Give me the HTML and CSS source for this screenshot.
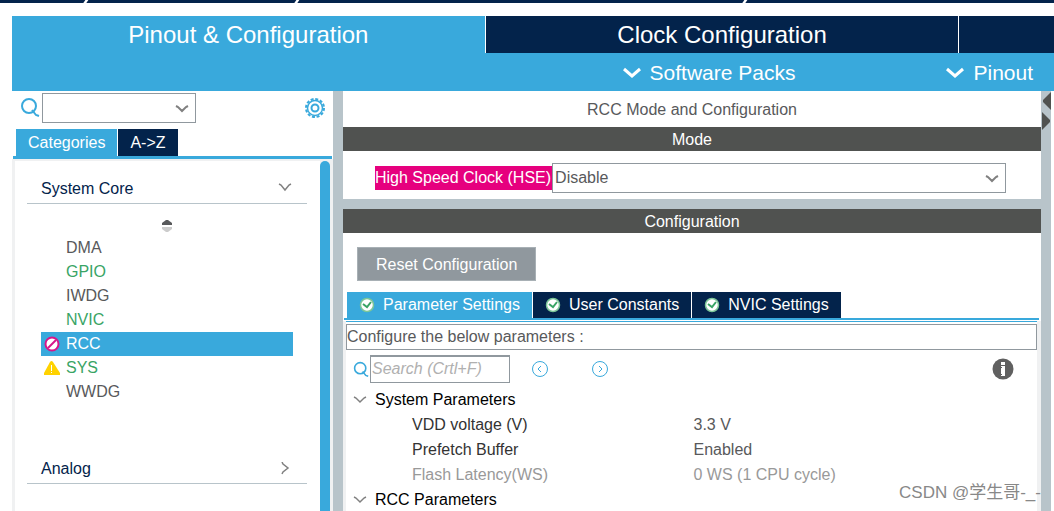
FILE: index.html
```html
<!DOCTYPE html>
<html lang="en">
<head>
    <meta charset="UTF-8">
    <meta name="viewport" content="width=device-width, initial-scale=1.0">
    <title>Pinout &amp; Configuration</title>
    <link rel="stylesheet" href="styles.css">
</head>
<body>
    <!-- Breadcrumb edge -->
    <div class="breadcrumb">
        <span class="slash first"></span>
        <span class="slash second"></span>
        <span class="slash third"></span>
    </div>

    <header>
        <nav class="main-tabs">
            <button class="main-tab active">Pinout &amp; Configuration</button>
            <button class="main-tab">Clock Configuration</button>
            <button class="main-tab" aria-label="Next tab"></button>
        </nav>
        <div class="sub-bar">
            <button class="menu-btn">
                <svg width="18" height="12" viewBox="0 0 18 12"><path d="M1 2 L9 9 L17 2" /></svg>
                Software Packs
            </button>
            <button class="menu-btn">
                <svg width="18" height="12" viewBox="0 0 18 12"><path d="M1 2 L9 9 L17 2" /></svg>
                Pinout
            </button>
        </div>
    </header>

    <div class="workspace">
        <aside class="sidebar">
            <div class="filter-row">
                <svg class="search-icon" width="20" height="20" viewBox="0 0 20 20"><circle cx="9" cy="8" r="7" /><path d="M12 12 L16 17 L19 18" /></svg>
                <span class="select-box filter-select">
                    <select aria-label="Filter"><option></option></select>
                    <svg class="arrow" width="14" height="8" viewBox="0 0 14 8"><path d="M1 1 L3 2 L7 6 L11 2 L13 1" /></svg>
                </span>
                <button class="icon-btn gear" aria-label="Settings">
                    <svg width="20" height="20" viewBox="0 0 20 20">
                        <circle cx="10" cy="10" r="9" stroke-width="2" stroke-dasharray="3 1.71" />
                        <circle cx="10" cy="10" r="7.5" stroke-width="1.5" />
                        <circle cx="10" cy="10" r="3.5" stroke-width="2" />
                    </svg>
                </button>
            </div>

            <div class="side-tabs">
                <button class="tab active">Categories</button>
                <button class="tab">A-&gt;Z</button>
            </div>

            <div class="category-panel">
                <div class="category-list">
                    <button class="category">
                        System Core
                        <svg class="chevron" width="14" height="14" viewBox="0 0 14 14"><path d="M1 2 L3 3 L7 8 L11 3 L13 2" /></svg>
                    </button>
                    <button class="sort-btn" aria-label="Sort">
                        <svg width="12" height="14" viewBox="0 0 12 14"><path fill="#58595b" d="M1 6 V4 L5 1 H7 L11 4 V6 Z" /><path fill="#cccccc" d="M1 8 V10 L5 13 H7 L11 10 V8 Z" /></svg>
                    </button>
                    <ul class="items">
                        <li><a href="#">DMA</a></li>
                        <li><a href="#" class="used">GPIO</a></li>
                        <li><a href="#">IWDG</a></li>
                        <li><a href="#" class="used">NVIC</a></li>
                        <li>
                            <a href="#" class="selected">
                                <svg class="status" width="18" height="18" viewBox="0 0 18 18"><circle cx="9" cy="9" r="6.5" fill="#ffffff" stroke="#d6168b" stroke-width="2" /><path stroke="#d6168b" stroke-width="2" d="M5 13 L13 5" /></svg>
                                RCC
                            </a>
                        </li>
                        <li>
                            <a href="#" class="used">
                                <svg class="status" width="18" height="18" viewBox="0 0 18 18"><path fill="#ffd200" d="M7 3 Q8.500 1 10 3 L17 14 V16 H1 V14 Z" /><path stroke="#ffffff" d="M8.500 6 V12 M8.500 13 V14" /></svg>
                                SYS
                            </a>
                        </li>
                        <li><a href="#">WWDG</a></li>
                    </ul>
                    <button class="category">
                        Analog
                        <svg class="chevron" width="14" height="14" viewBox="0 0 14 14"><path d="M4 0 L5 2 L10 6 L5 10 L4 12" /></svg>
                    </button>
                </div>
                <div class="scroll-track"><div class="scroll-thumb"></div></div>
            </div>
        </aside>

        <main>
            <section class="mode-panel">
                <h1>RCC Mode and Configuration</h1>
                <h2>Mode</h2>
                <div class="mode-row">
                    <label for="hse">High Speed Clock (HSE)</label>
                    <span class="select-box hse-select">
                        <select id="hse"><option>Disable</option></select>
                        <svg class="arrow" width="14" height="8" viewBox="0 0 14 8"><path d="M1 1 L3 2 L7 6 L11 2 L13 1" /></svg>
                    </span>
                </div>
            </section>

            <section class="config-panel">
                <h2>Configuration</h2>
                <button class="reset-btn">Reset Configuration</button>

                <div class="config-tabs">
                    <button class="tab active">
                        <svg width="16" height="16" viewBox="0 0 16 16"><circle cx="8" cy="8" r="6.5" fill="#ffffff" stroke="#7cc698" stroke-width="1.5" /><path stroke="#39a465" stroke-width="2" d="M4 7 L8 10 L12 5" /></svg>
                        Parameter Settings
                    </button>
                    <button class="tab">
                        <svg width="16" height="16" viewBox="0 0 16 16"><circle cx="8" cy="8" r="6.5" fill="#ffffff" stroke="#7cc698" stroke-width="1.5" /><path stroke="#39a465" stroke-width="2" d="M4 7 L8 10 L12 5" /></svg>
                        User Constants
                    </button>
                    <button class="tab">
                        <svg width="16" height="16" viewBox="0 0 16 16"><circle cx="8" cy="8" r="6.5" fill="#ffffff" stroke="#7cc698" stroke-width="1.5" /><path stroke="#39a465" stroke-width="2" d="M4 7 L8 10 L12 5" /></svg>
                        NVIC Settings
                    </button>
                </div>

                <div class="parameters">
                    <p class="hint">Configure the below parameters :</p>
                    <div class="search-row">
                        <svg class="search-icon" width="16" height="16" viewBox="0 0 20 20"><circle cx="9" cy="9" r="7" /><path d="M12 13 L16 18 L19 19" /></svg>
                        <input type="text" aria-label="Search" placeholder="Search (Crtl+F)">
                        <button class="icon-btn" aria-label="Previous">
                            <svg width="18" height="18" viewBox="0 0 18 18"><circle cx="9" cy="9" r="7.5" /><path d="M10 6 L7 9 L10 12" /></svg>
                        </button>
                        <button class="icon-btn" aria-label="Next">
                            <svg width="18" height="18" viewBox="0 0 18 18"><circle cx="9" cy="9" r="7.5" /><path d="M8 6 L11 9 L8 12" /></svg>
                        </button>
                        <button class="icon-btn info" aria-label="Information">
                            <svg width="22" height="22" viewBox="0 0 22 22"><circle cx="11" cy="11" r="10.500" fill="#606060" stroke="none" /><path fill="#ffffff" stroke="none" d="M9 4 H13 V7 H9 Z M9 8 H13 V18 H9 Z" /><path stroke="#606060" d="M9 9.500 H10 M9 16.500 H10" /></svg>
                        </button>
                    </div>
                    <table>
                        <tr class="group">
                            <th colspan="2"><svg class="chevron" width="14" height="14" viewBox="0 0 14 14"><path d="M1 4 L3 5 L7 9 L11 5 L13 4" /></svg>System Parameters</th>
                        </tr>
                        <tr><td>VDD voltage (V)</td><td>3.3 V</td></tr>
                        <tr><td>Prefetch Buffer</td><td>Enabled</td></tr>
                        <tr class="disabled"><td>Flash Latency(WS)</td><td>0 WS (1 CPU cycle)</td></tr>
                        <tr class="group">
                            <th colspan="2"><svg class="chevron" width="14" height="14" viewBox="0 0 14 14"><path d="M1 4 L3 5 L7 9 L11 5 L13 4" /></svg>RCC Parameters</th>
                        </tr>
                    </table>
                </div>
            </section>
        </main>

        <div class="splitter">
            <button class="icon-btn" aria-label="Collapse"><svg width="10" height="20" viewBox="0 0 10 20"><path d="M10 1 V19 L2 11 V9 Z" /></svg></button>
            <button class="icon-btn" aria-label="Expand"><svg width="10" height="20" viewBox="0 0 10 20"><path d="M1 1 V19 L9 11 V9 Z" /></svg></button>
        </div>
    </div>

    <div class="watermark">CSDN @学生哥-_-</div>
</body>
</html>
```
FILE: styles.css
```css
/* Global Styles */
* {
    box-sizing: border-box;
}

body {
    font-family: "Liberation Sans", "Noto Sans CJK SC", Arial, sans-serif;
    font-size: 16px;
    line-height: 24px;
    color: #58595b;
    background-color: white;
    margin: 0;
    height: 100vh;
    overflow: hidden;
    display: flex;
    flex-direction: column;
}

button,
select,
input {
    font: inherit;
    color: inherit;
    border: none;
    border-radius: 0;
    background: none;
    margin: 0;
    padding: 0;
}

button {
    cursor: pointer;
}

svg {
    display: block;
    flex: none;
    fill: none;
}

h1,
h2 {
    margin: 0;
    font-size: 16px;
    font-weight: normal;
    text-align: center;
}

h2 {
    height: 24px;
    line-height: 26px;
    background-color: #505250;
    color: white;
}

/* Breadcrumb edge */
.breadcrumb {
    position: relative;
    flex: none;
    height: 3px;
    margin-bottom: 13px;
    background-color: #03234b;
    overflow: hidden;
}

.slash {
    position: absolute;
    top: 0;
    width: 3px;
    height: 4px;
    background-color: white;
    transform: skewX(-35deg);
}

.slash.first {
    left: 8%;
}

.slash.second {
    left: 28%;
}

.slash.third {
    left: 70.5%;
}

/* Header */
header {
    flex: none;
    margin-left: 12px;
    background-color: #39a9dc;
    color: white;
}

.main-tabs {
    display: grid;
    grid-template-columns: 5fr 5fr 1fr;
    gap: 1px;
    height: 37px;
    background-color: white;
}

.main-tab {
    background-color: #03234b;
    font-size: 24px;
}

.sub-bar {
    display: flex;
    justify-content: flex-end;
    gap: 151px;
    height: 38px;
    padding: 2px 21px 0 0;
}

.menu-btn {
    display: flex;
    align-items: center;
    gap: 9px;
    font-size: 21px;
}

.menu-btn svg {
    stroke: white;
    stroke-width: 3;
}

/* Workspace */
.workspace {
    flex: 1;
    min-height: 0;
    display: flex;
    padding-right: 3px;
}

.sidebar {
    flex: none;
    width: 343px;
    padding-left: 12px;
    border-right: 10px solid #b8c4ca;
    display: flex;
    flex-direction: column;
}

.filter-row {
    display: flex;
    align-items: center;
    gap: 2px;
    height: 34px;
    padding: 0 8px;
}

.search-icon {
    stroke: #39a9dc;
    stroke-width: 2;
}

.select-box {
    position: relative;
    height: 30px;
    border: 1px solid #90989e;
}

.select-box select {
    display: block;
    width: 100%;
    height: 100%;
    padding-left: 2px;
    appearance: none;
}

.arrow {
    position: absolute;
    right: 6px;
    top: 11px;
    stroke: #808080;
    stroke-width: 2;
    pointer-events: none;
}

.filter-select {
    width: 154px;
}

.icon-btn svg {
    stroke: #39a9dc;
}

.gear {
    margin-left: auto;
}

/* Tabs */
.side-tabs {
    display: flex;
    gap: 1px;
    margin: 4px 1px 0;
    padding-left: 3px;
    border-bottom: 3px solid #39a9dc;
}

.tab {
    display: flex;
    align-items: center;
    justify-content: center;
    gap: 8px;
    height: 27px;
    padding: 0 12px;
    background-color: #03234b;
    color: white;
}

.active {
    background-color: #39a9dc;
}

/* Categories */
.category-panel {
    flex: 1;
    min-height: 0;
    display: flex;
    border: 3px solid #f0f1f2;
    border-width: 2px 0 0 3px;
}

.category-list {
    flex: 1;
    padding: 12px 13px 0 12px;
    display: flex;
    flex-direction: column;
}

.category {
    display: flex;
    align-items: center;
    justify-content: space-between;
    height: 31px;
    padding: 2px 15px 0 14px;
    border-bottom: 1px solid #b8c4ca;
    color: #03234b;
}

.chevron {
    stroke: #808080;
    stroke-width: 1.5;
}

.sort-btn {
    align-self: center;
    padding: 15px 0 3px;
}

.items {
    list-style: none;
    margin: 0 14px 49px;
    padding: 0;
}

.items a {
    display: flex;
    align-items: center;
    gap: 5px;
    height: 24px;
    padding-left: 25px;
    color: inherit;
    text-decoration: none;
}

.items a:has(.status) {
    padding-left: 2px;
}

.items .used {
    color: #39a465;
}

.items .selected {
    background-color: #39a9dc;
    color: white;
}

.scroll-track {
    width: 13px;
    padding-right: 3px;
    background-color: #f0f1f2;
}

.scroll-thumb {
    height: 100%;
    background-color: #39a9dc;
    border-radius: 5px 5px 0 0;
}

/* Mode */
main {
    flex: 1;
    min-width: 0;
    display: flex;
    flex-direction: column;
}

h1 {
    height: 36px;
    padding-top: 7px;
}

.mode-panel {
    border-bottom: 10px solid #b8c4ca;
}

.mode-row {
    display: flex;
    align-items: center;
    height: 48px;
    padding: 6px 35px 0 32px;
}

.mode-row label {
    background-color: #e6007e;
    color: white;
    padding-right: 1px;
}

.hse-select {
    flex: 1;
}

/* Configuration */
.config-panel {
    flex: 1;
    display: flex;
    flex-direction: column;
}

.reset-btn {
    align-self: flex-start;
    height: 34px;
    margin: 14px 14px 11px;
    padding: 1px 18px 0;
    border: 1px solid #a8b0b5;
    background-color: #90989e;
    color: white;
}

.config-tabs {
    display: flex;
    gap: 1px;
    margin: 0 2px 0 1px;
    padding-left: 3px;
    border-bottom: 2px solid #39a9dc;
}

.config-tabs .tab {
    height: 26px;
}

.parameters {
    flex: 1;
    margin-top: 1px;
    border: 3px solid #f0f1f2;
    border-width: 0 4px 0 3px;
}

.parameters::before {
    content: "";
    display: block;
    height: 2px;
    border-top: 1px solid #39a9dc;
}

.hint {
    margin: 0;
    height: 26px;
    border: 1px solid #90989e;
}

.search-row {
    display: flex;
    align-items: center;
    height: 37px;
    padding: 0 23px 0 7px;
}

.search-row input {
    width: 140px;
    height: 28px;
    margin: 0 21px 0 1px;
    padding-left: 1px;
    border: 1px solid #90989e;
    border-top-width: 2px;
}

.search-row input::placeholder {
    color: #b0b0b0;
    font-style: italic;
}

.search-row .icon-btn {
    margin-right: 42px;
}

.search-row .info {
    margin: 0 0 0 auto;
}

table {
    width: 100%;
    border-collapse: collapse;
    table-layout: fixed;
}

th,
td {
    height: 25px;
    padding: 0;
    font-weight: normal;
    text-align: left;
}

td:first-child {
    padding-left: 66px;
    color: #333333;
}

th {
    color: #000000;
}

th .chevron {
    display: inline-block;
    margin: 0 8px 0 7px;
    vertical-align: middle;
}

td:last-child {
    padding-left: 2px;
}

.disabled td,
.disabled td:first-child {
    color: #999999;
}

/* Right splitter */
.splitter {
    flex: none;
    width: 10px;
    background-color: #b8c4ca;
}

.splitter .icon-btn {
    display: block;
}

.splitter svg {
    fill: #505250;
    stroke: none;
}

.watermark {
    position: absolute;
    right: 13px;
    bottom: 6px;
    font-size: 17px;
    color: #888888;
}
```
